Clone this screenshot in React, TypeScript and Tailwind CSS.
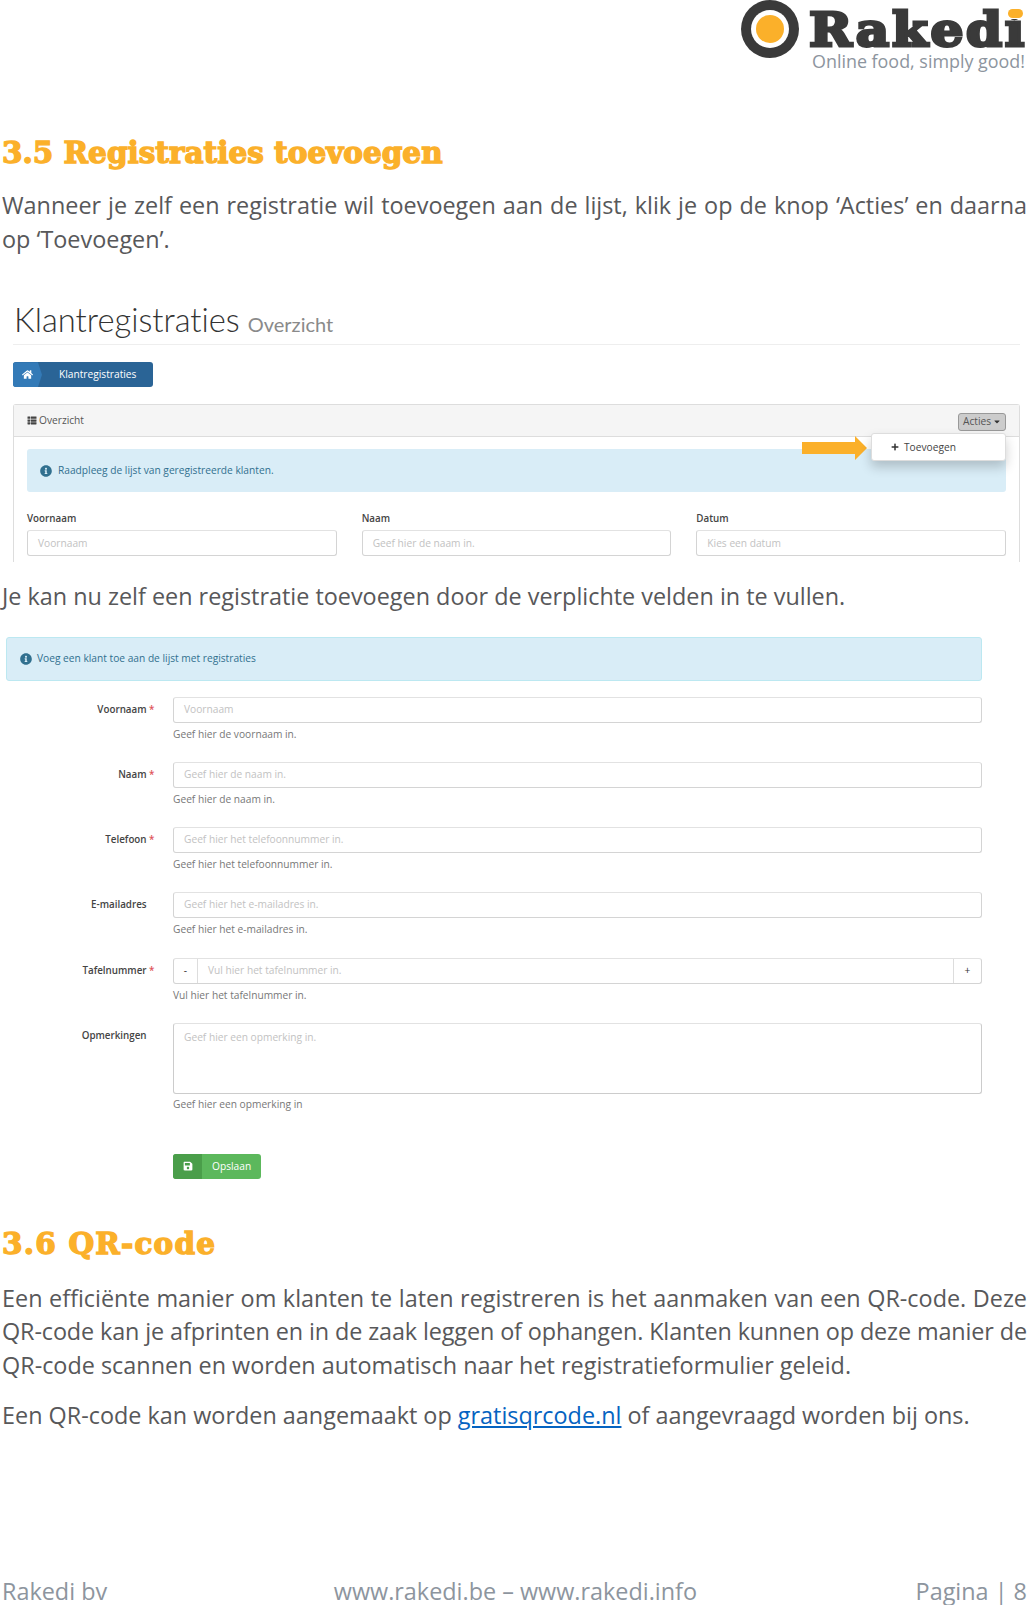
import { FaCaretDown, FaHome, FaInfoCircle, FaPlus, FaSave, FaThList } from 'react-icons/fa';

const body = "font-['Open_Sans',sans-serif] text-[23.4px] leading-[33.6px] text-[#58585a] whitespace-nowrap";
const justified = "w-[1025px] [text-align-last:justify]";
const heading = "font-['DejaVu_Serif',serif] font-bold text-[29.5px] leading-[38px] text-[#fbb02a] whitespace-nowrap [-webkit-text-stroke:1.4px_#fbb02a]";

const fieldBox = "h-[26px] rounded-[3px] border border-[#d4d4d4] border-t-[#e2e2e2] bg-white flex items-center text-[10.2px] text-[#c2c2c2] whitespace-nowrap";
const labelText = "w-[155px] shrink-0 pt-[6px] pr-[6.5px] text-right text-[9.8px] font-semibold text-[#444] whitespace-nowrap";

const FormRow = ({ label, required, placeholder, help, rowClass }: { label: string; required?: boolean; placeholder: string; help: string; rowClass: string }) => (
  <div className={`flex ${rowClass}`}>
    <div className={labelText}>
      {label}
      {required ? <span className="text-[#e0535a]"> *</span> : <span className="invisible"> *</span>}
    </div>
    <div className="ml-[12px] flex-1">
      <div className={`${fieldBox} pl-[10px]`}>{placeholder}</div>
      <div className="mt-[4px] text-[10.2px] leading-[14px] text-[#777] whitespace-nowrap">{help}</div>
    </div>
  </div>
);

const Field = ({ label, placeholder }: { label: string; placeholder: string }) => (
  <div className="flex-1">
    <div className="text-[9.8px] leading-[14px] font-semibold text-[#444]">{label}</div>
    <div className={`${fieldBox} mt-[4px] pl-[10px]`}>{placeholder}</div>
  </div>
);

const Overview = () => (
  <div className="mt-[42px] h-[264px] overflow-hidden pl-[13px] pr-[8px] font-['Open_Sans',sans-serif]">
    <div className="flex h-[47px] items-baseline border-b border-[#eee] pl-[1px]">
      <span className="font-['Lato',sans-serif] font-light text-[32.7px] leading-[44px] text-[#333] [font-variant-ligatures:none]">Klantregistraties</span>
      <span className="ml-[8px] font-['Lato',sans-serif] text-[20px] text-[#8a8a8a]">Overzicht</span>
    </div>
    <div className="relative mt-[17px] flex h-[25px] w-[140px] items-center overflow-hidden rounded-[3px] bg-[#2a6496] text-[10.2px] text-white">
      <div className="flex h-full w-[29px] items-center justify-center bg-[#337ab7] [clip-path:polygon(0_0,86%_0,100%_50%,86%_100%,0_100%)]">
        <FaHome className="h-[11px] w-[11px]" />
      </div>
      <span className="ml-[17px]">Klantregistraties</span>
    </div>
    <div className="relative mt-[17px] h-[200px] rounded-t-[3px] border border-b-0 border-[#ddd]">
      <div className="flex h-[32px] items-center justify-between border-b border-[#ddd] bg-[#f5f5f5] pl-[13px] pr-[13px]">
        <div className="flex items-center gap-[2px] text-[10.2px] text-[#555]">
          <FaThList className="h-[9px] w-[10px] text-[#444]" />
          Overzicht
        </div>
        <div className="mt-[2px] flex h-[18px] w-[48px] items-center justify-center gap-[2px] rounded-[3px] border border-[#999] bg-[#ccc] text-[10.2px] text-[#555]">
          Acties
          <FaCaretDown className="h-[9px] w-[8px] text-[#333]" />
        </div>
      </div>
      <div className="mx-[13px] mt-[12px] flex h-[43px] items-center gap-[6px] rounded-[3px] bg-[#d9edf7] pl-[13px] text-[10.2px] text-[#31708f]">
        <FaInfoCircle className="h-[12px] w-[12px]" />
        Raadpleeg de lijst van geregistreerde klanten.
      </div>
      <div className="mx-[13px] mt-[20px] flex gap-[25px]">
        <Field label="Voornaam" placeholder="Voornaam" />
        <Field label="Naam" placeholder="Geef hier de naam in." />
        <Field label="Datum" placeholder="Kies een datum" />
      </div>
      <svg className="absolute left-[788px] top-[31px]" width="65" height="24" viewBox="0 0 65 24">
        <path d="M0 6H53V0L65 12L53 24V18H0Z" fill="#fbb02a" />
      </svg>
      <div className="absolute right-[13px] top-[28px] flex h-[28px] w-[135px] items-center rounded-[3px] border border-[#ddd] bg-white pl-[19px] text-[10.2px] text-[#444] shadow-[0_6px_12px_rgba(0,0,0,0.2)]">
        <FaPlus className="mr-[5px] h-[8px] w-[8px] text-[#333]" />
        Toevoegen
      </div>
    </div>
  </div>
);

const RegisterForm = () => (
  <div className="ml-[6px] mt-[23px] w-[976px] font-['Open_Sans',sans-serif]">
    <div className="flex h-[44px] items-center gap-[5px] rounded-[3px] border border-[#bce8f1] bg-[#d9edf7] pl-[13px] text-[10.2px] text-[#31708f]">
      <FaInfoCircle className="h-[12px] w-[12px]" />
      Voeg een klant toe aan de lijst met registraties
    </div>
    <div className="mt-[16px]">
      <FormRow rowClass="h-[65px]" label="Voornaam" required placeholder="Voornaam" help="Geef hier de voornaam in." />
      <FormRow rowClass="h-[65px]" label="Naam" required placeholder="Geef hier de naam in." help="Geef hier de naam in." />
      <FormRow rowClass="h-[65px]" label="Telefoon" required placeholder="Geef hier het telefoonnummer in." help="Geef hier het telefoonnummer in." />
      <FormRow rowClass="h-[66px]" label="E-mailadres" placeholder="Geef hier het e-mailadres in." help="Geef hier het e-mailadres in." />
      <div className="flex h-[65px]">
        <div className={labelText}>
          Tafelnummer<span className="text-[#e0535a]"> *</span>
        </div>
        <div className="ml-[12px] flex-1">
          <div className={fieldBox}>
            <div className="flex h-full w-[24px] items-center justify-center border-r border-[#ddd] text-[#333]">-</div>
            <div className="flex-1 pl-[10px]">Vul hier het tafelnummer in.</div>
            <div className="flex h-full w-[28px] items-center justify-center border-l border-[#ddd] text-[#333]">+</div>
          </div>
          <div className="mt-[4px] text-[10.2px] leading-[14px] text-[#777]">Vul hier het tafelnummer in.</div>
        </div>
      </div>
      <div className="flex">
        <div className={labelText}>
          Opmerkingen<span className="invisible"> *</span>
        </div>
        <div className="ml-[12px] flex-1">
          <div className="h-[71px] rounded-[3px] border border-[#ccc] border-t-[#e2e2e2] pl-[10px] pt-[6px] text-[10.2px] text-[#c2c2c2]">Geef hier een opmerking in.</div>
          <div className="mt-[3px] text-[10.2px] leading-[14px] text-[#777]">Geef hier een opmerking in</div>
          <div className="mt-[43px] flex h-[25px] w-[88px] items-center overflow-hidden rounded-[3px] bg-[#5cb85c] text-[10.2px] text-white">
            <div className="flex h-full w-[29px] items-center justify-center bg-[#4a9e4a]">
              <FaSave className="h-[10px] w-[10px]" />
            </div>
            <span className="ml-[10px]">Opslaan</span>
          </div>
        </div>
      </div>
    </div>
  </div>
);

export default function App() {
  return (
    <div className="flex h-[1605px] w-[1028px] flex-col overflow-hidden bg-white">
      <header className="flex h-[72px] justify-end">
        <div className="mr-[10px] flex h-[58px] w-[58px] items-center justify-center rounded-full bg-[#3a3a3a]">
          <div className="flex h-[38px] w-[38px] items-center justify-center rounded-full bg-white">
            <div className="h-[28px] w-[28px] rounded-full bg-[#fbb02a]" />
          </div>
        </div>
        <div className="relative mr-[1px] mt-[1px] w-[218px]">
          <div className="mt-[7px] origin-left scale-x-[1.1] font-['DejaVu_Serif',serif] font-bold text-[47px] leading-[44px] tracking-[2.4px] text-[#3a3a3a] [-webkit-text-stroke:3px_#3a3a3a] whitespace-nowrap">Rakedi</div>
          <div className="absolute left-[196px] top-[6px] h-[12px] w-[20px] bg-white">
            <div className="mx-auto mt-[2px] h-[9px] w-[15px] rounded-full bg-[#fbb02a]" />
          </div>
          <div className="mt-[-1px] pl-[3px] font-['Open_Sans',sans-serif] text-[17.9px] leading-[20px] text-[#8d959e] whitespace-nowrap">Online food, simply good!</div>
        </div>
      </header>
      <h2 className={`${heading} ml-[2px] mt-[62px]`}>3.5 Registraties toevoegen</h2>
      <div className={`${body} ml-[2px] mt-[17px]`}>
        <p className={justified}>Wanneer je zelf een registratie wil toevoegen aan de lijst, klik je op de knop ‘Acties’ en daarna</p>
        <p>op ‘Toevoegen’.</p>
      </div>
      <Overview />
      <p className={`${body} ml-[2px] mt-[18px]`}>Je kan nu zelf een registratie toevoegen door de verplichte velden in te vullen.</p>
      <RegisterForm />
      <h2 className={`${heading} ml-[2px] mt-[46px] tracking-[1.2px]`}>3.6 QR-code</h2>
      <div className={`${body} ml-[2px] mt-[19px]`}>
        <p className={justified}>Een efficiënte manier om klanten te laten registreren is het aanmaken van een QR-code. Deze</p>
        <p className={`${justified} tracking-[-0.12px]`}>QR-code kan je afprinten en in de zaak leggen of ophangen. Klanten kunnen op deze manier de</p>
        <p>QR-code scannen en worden automatisch naar het registratieformulier geleid.</p>
        <p className="mt-[16px]">
          Een QR-code kan worden aangemaakt op <a className="text-[#0563c1] underline" href="#">gratisqrcode.nl</a> of aangevraagd worden bij ons.
        </p>
      </div>
      <footer className="mt-auto flex items-center justify-between pl-[2px] pr-[1px] font-['Open_Sans',sans-serif] text-[23.4px] leading-[27px] text-[#8d959e]">
        <span>Rakedi bv</span>
        <span className="ml-[8px]">www.rakedi.be – www.rakedi.info</span>
        <span>Pagina | 8</span>
      </footer>
    </div>
  );
}
